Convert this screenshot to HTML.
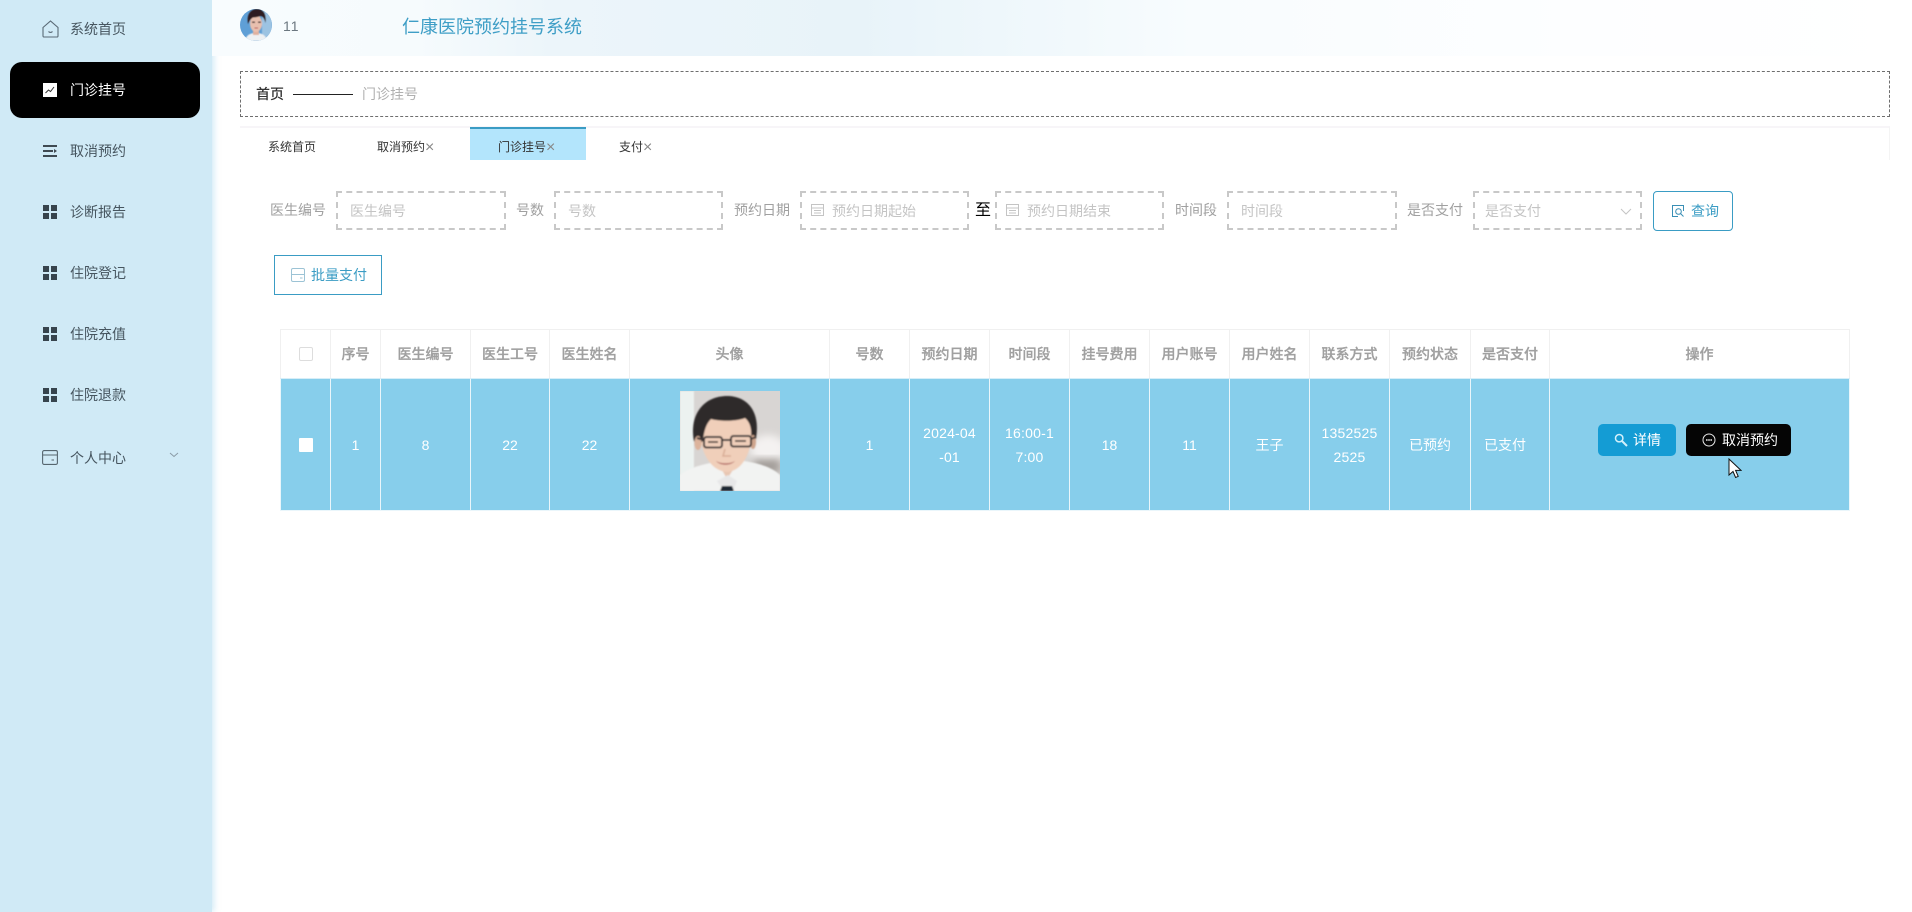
<!DOCTYPE html>
<html lang="zh">
<head>
<meta charset="utf-8">
<title>仁康医院预约挂号系统</title>
<style>
*{box-sizing:border-box}
html,body{margin:0;padding:0;width:1912px;height:912px;overflow:hidden;background:#fff;font-family:"Liberation Sans","Noto Sans CJK SC",sans-serif;font-size:14px}
.a{position:absolute;white-space:nowrap}
#side{position:absolute;left:0;top:0;width:212px;height:912px;background:#d0eaf6;box-shadow:2px 0 6px rgba(190,225,242,.7)}
.mi{position:absolute;left:70px;height:24px;line-height:24px;color:#46555f;font-size:14px;white-space:nowrap}
.ic{position:absolute;left:42px}
#active{position:absolute;left:10px;top:62px;width:190px;height:56px;background:#000;border-radius:12px}
#hd{position:absolute;left:212px;top:0;width:1700px;height:56px;background:linear-gradient(90deg,#f8fcfe 0,#f6fbfd 12%,#ecf5fa 20%,#e8f3f9 38%,#eef7fb 46%,#f8fcfe 58%,#fdfeff 80%,#fff 100%)}
.inp{position:absolute;top:191px;height:39px;border:2px dashed #c8c8c8}
.ph{position:absolute;top:199px;line-height:24px;color:#c4c4c4;font-size:14px;white-space:nowrap}
.lb{position:absolute;top:198px;line-height:24px;color:#a0a0a0;font-size:14px;white-space:nowrap}
.tab{position:absolute;top:135px;line-height:24px;font-size:12px;color:#333;white-space:nowrap}
.x{color:#888;font-size:16px;line-height:20px;vertical-align:-1px}
table{position:absolute;left:280px;top:329px;width:1569px;border-collapse:collapse;table-layout:fixed}
th{height:49px;background:#fff;color:#a0a0a0;font-weight:500;font-size:14px;border:1px solid #f0f0f0;border-bottom:1px solid #d6eef8;padding:0;-webkit-text-stroke:.3px #a0a0a0}
td{height:132px;background:#87ceeb;color:#fff;font-size:14px;line-height:24px;text-align:center;border:1px solid #eaf6fb;padding:0 8px;word-break:break-all;vertical-align:middle}
</style>
</head>
<body>
<div id="side"></div>
<div id="active"></div>

<!-- sidebar icons -->
<svg class="ic" style="top:20px" width="17" height="18" viewBox="0 0 17 18" fill="none" stroke="#5a6a76" stroke-width="1.1"><path d="M1 7.5 8.5 1 16 7.5V16a1 1 0 0 1-1 1H2a1 1 0 0 1-1-1Z"/><path d="M6.5 11.5c1 1.2 3 1.2 4 0"/></svg>
<div class="mi" style="top:17px">系统首页</div>

<svg class="ic" style="top:83px;left:43px" width="14" height="14" viewBox="0 0 14 14"><rect width="14" height="14" fill="#fff"/><path d="M2.5 10 5.5 7 7.5 8.5 11 4" fill="none" stroke="#333" stroke-width="1"/></svg>
<div class="mi" style="top:78px;color:#fff">门诊挂号</div>

<svg class="ic" style="top:144px;left:43px" width="14" height="14" viewBox="0 0 14 14" fill="#3f4a52"><rect y="1" width="14" height="2"/><rect y="6" width="10" height="2"/><rect y="11" width="14" height="2"/><path d="M11 5v4l3-2z"/></svg>
<div class="mi" style="top:139px">取消预约</div>

<svg class="ic" style="top:205px;left:43px" width="14" height="14" fill="#37444d"><rect width="6" height="6"/><rect x="8" width="6" height="6"/><rect y="8" width="6" height="6"/><rect x="8" y="8" width="6" height="6"/></svg>
<div class="mi" style="top:200px">诊断报告</div>

<svg class="ic" style="top:266px;left:43px" width="14" height="14" fill="#37444d"><rect width="6" height="6"/><rect x="8" width="6" height="6"/><rect y="8" width="6" height="6"/><rect x="8" y="8" width="6" height="6"/></svg>
<div class="mi" style="top:261px">住院登记</div>

<svg class="ic" style="top:327px;left:43px" width="14" height="14" fill="#37444d"><rect width="6" height="6"/><rect x="8" width="6" height="6"/><rect y="8" width="6" height="6"/><rect x="8" y="8" width="6" height="6"/></svg>
<div class="mi" style="top:322px">住院充值</div>

<svg class="ic" style="top:388px;left:43px" width="14" height="14" fill="#37444d"><rect width="6" height="6"/><rect x="8" width="6" height="6"/><rect y="8" width="6" height="6"/><rect x="8" y="8" width="6" height="6"/></svg>
<div class="mi" style="top:383px">住院退款</div>

<svg class="ic" style="top:450px" width="16" height="15" viewBox="0 0 16 15" fill="none" stroke="#56666f" stroke-width="1.1"><rect x=".6" y=".6" width="14.8" height="13.8" rx="1.5"/><path d="M.6 5h14.8M9.5 10h2.5"/></svg>
<div class="mi" style="top:446px">个人中心</div>
<svg class="a" style="left:169px;top:452px" width="10" height="6" viewBox="0 0 10 6" fill="none" stroke="#8a9aa5"><path d="M1 1l4 3.5L9 1"/></svg>

<!-- header -->
<div id="hd"></div>
<svg class="a" style="left:240px;top:9px" width="32" height="32" viewBox="0 0 32 32">
<defs><clipPath id="av"><circle cx="16" cy="16" r="16"/></clipPath><filter id="b1"><feGaussianBlur stdDeviation=".4"/></filter></defs>
<g clip-path="url(#av)"><rect width="32" height="32" fill="#5f9fd6"/><g filter="url(#b1)">
<rect x="22" y="0" width="10" height="32" fill="#9cc3e2"/>
<path d="M5 32c1-6 5-8 11-8s10 2 11 8z" fill="#eef0f2"/>
<rect x="13" y="20" width="6" height="6" fill="#e0b09e"/>
<ellipse cx="16" cy="14.5" rx="6" ry="8.5" fill="#e8bfae"/>
<path d="M8 15C6 4 12 0 17 0s10 3 8.5 14c-1-4-2.5-6-4.5-7-3 1-6 1.5-8 1.5-2 1-3.5 3-5 6.500z" fill="#2e1f20"/>
<rect x="12" y="12.5" width="3" height="1.3" fill="#2e1f20"/><rect x="18" y="12.5" width="3" height="1.3" fill="#2e1f20"/>
<rect x="14.5" y="18.5" width="3.5" height="1" fill="#b84f55"/>
</g></g></svg>
<div class="a" style="left:283px;top:14px;line-height:24px;color:#6b7780;font-size:14px;letter-spacing:1px">11</div>
<div class="a" style="left:402px;top:14px;line-height:26px;color:#3e9ec6;font-size:18px">仁康医院预约挂号系统</div>

<!-- breadcrumb -->
<div class="a" style="left:240px;top:71px;width:1650px;height:46px;border:1px dashed #6e6e6e"></div>
<div class="a" style="left:256px;top:82px;line-height:24px;color:#333;font-size:14px;font-weight:500">首页</div>
<div class="a" style="left:293px;top:94px;width:60px;height:1px;background:#222"></div>
<div class="a" style="left:362px;top:82px;line-height:24px;color:#b0b0b0;font-size:14px">门诊挂号</div>

<!-- tabs -->
<div class="a" style="left:240px;top:126px;width:1650px;height:34px;border-top:2px solid #f7f5f8;border-right:1px solid #f4f4f4"></div>
<div class="a" style="left:470px;top:127px;width:116px;height:33px;background:#b3e5fc;border-top:2px solid #3a9cc4"></div>
<div class="tab" style="left:268px">系统首页</div>
<div class="tab" style="left:377px">取消预约<span class="x">×</span></div>
<div class="tab" style="left:498px">门诊挂号<span class="x">×</span></div>
<div class="tab" style="left:619px">支付<span class="x">×</span></div>

<!-- search form -->
<div class="lb" style="left:270px">医生编号</div>
<div class="inp" style="left:336px;width:170px"></div>
<div class="ph" style="left:350px">医生编号</div>
<div class="lb" style="left:516px">号数</div>
<div class="inp" style="left:554px;width:169px"></div>
<div class="ph" style="left:568px">号数</div>
<div class="lb" style="left:734px">预约日期</div>
<div class="inp" style="left:800px;width:169px"></div>
<svg class="a" style="left:811px;top:203px" width="13" height="13" viewBox="0 0 13 13" fill="none" stroke="#c4c4c4"><rect x=".5" y="1.5" width="12" height="11"/><path d="M.5 5h12M3 7.5h7M3 10h7"/></svg>
<div class="ph" style="left:832px">预约日期起始</div>
<div class="a" style="left:975px;top:199px;line-height:24px;color:#000;font-size:16px">至</div>
<div class="inp" style="left:995px;width:169px"></div>
<svg class="a" style="left:1006px;top:203px" width="13" height="13" viewBox="0 0 13 13" fill="none" stroke="#c4c4c4"><rect x=".5" y="1.5" width="12" height="11"/><path d="M.5 5h12M3 7.5h7M3 10h7"/></svg>
<div class="ph" style="left:1027px">预约日期结束</div>
<div class="lb" style="left:1175px">时间段</div>
<div class="inp" style="left:1227px;width:170px"></div>
<div class="ph" style="left:1241px">时间段</div>
<div class="lb" style="left:1407px">是否支付</div>
<div class="inp" style="left:1473px;width:169px"></div>
<div class="ph" style="left:1485px">是否支付</div>
<svg class="a" style="left:1620px;top:208px" width="12" height="7" viewBox="0 0 12 7" fill="none" stroke="#c4c4c4"><path d="M1 1l5 5 5-5"/></svg>

<div class="a" style="left:1653px;top:191px;width:80px;height:40px;border:1px solid #3a9cc4;border-radius:4px"></div>
<svg class="a" style="left:1671px;top:204px" width="14" height="14" viewBox="0 0 14 14" fill="none" stroke="#3a8fb5"><path d="M12.5 7V1.5h-11v11H7"/><circle cx="7.5" cy="7.5" r="2.8"/><path d="M9.6 9.6 12.5 12.5"/></svg>
<div class="a" style="left:1691px;top:199px;line-height:24px;color:#3a9cc4;font-size:14px">查询</div>

<!-- batch -->
<div class="a" style="left:274px;top:255px;width:108px;height:40px;border:1px solid #3a9cc4"></div>
<svg class="a" style="left:291px;top:268px" width="14" height="14" viewBox="0 0 14 14" fill="none" stroke="#9cc3d5"><rect x=".5" y=".5" width="13" height="13" rx="1.5"/><path d="M.5 6.5h13M9 10h2.5"/></svg>
<div class="a" style="left:311px;top:263px;line-height:24px;color:#3a9cc4;font-size:14px">批量支付</div>

<!-- table -->
<table>
<colgroup><col style="width:50px"><col style="width:50px"><col style="width:90px"><col style="width:79px"><col style="width:80px"><col style="width:200px"><col style="width:80px"><col style="width:80px"><col style="width:80px"><col style="width:80px"><col style="width:80px"><col style="width:80px"><col style="width:80px"><col style="width:81px"><col style="width:79px"><col style="width:300px"></colgroup>
<tr><th></th><th>序号</th><th>医生编号</th><th>医生工号</th><th>医生姓名</th><th>头像</th><th>号数</th><th>预约日期</th><th>时间段</th><th>挂号费用</th><th>用户账号</th><th>用户姓名</th><th>联系方式</th><th>预约状态</th><th>是否支付</th><th>操作</th></tr>
<tr><td></td><td>1</td><td>8</td><td>22</td><td>22</td><td></td><td>1</td><td style="letter-spacing:.2px">2024-04<br>-01</td><td style="letter-spacing:.2px">16:00-1<br>7:00</td><td>18</td><td>11</td><td>王子</td><td style="letter-spacing:.2px">1352525<br>2525</td><td>已预约</td><td><span style="position:relative;left:-5px">已支付</span></td><td></td></tr>
</table>

<div class="a" style="left:299px;top:347px;width:14px;height:14px;border:1px solid #ddd;border-radius:2px;background:#fff"></div>
<div class="a" style="left:299px;top:438px;width:14px;height:14px;background:#fff;border-radius:1px"></div>

<!-- doctor photo -->
<svg class="a" style="left:680px;top:391px" width="100" height="100" viewBox="0 0 100 100">
<defs>
<filter id="b2" x="-10%" y="-10%" width="120%" height="120%"><feGaussianBlur stdDeviation=".9"/></filter>
<filter id="b3" x="-30%" y="-30%" width="160%" height="160%"><feGaussianBlur stdDeviation="4"/></filter>
<clipPath id="ph"><rect width="100" height="100"/></clipPath>
</defs>
<g clip-path="url(#ph)">
<rect width="100" height="100" fill="#d8d5d3"/>
<rect width="14" height="100" fill="#ecf2f0" filter="url(#b2)"/>
<ellipse cx="88" cy="58" rx="18" ry="14" fill="#f4f2f1" filter="url(#b3)"/>
<rect x="74" y="68" width="26" height="14" fill="#a39d99" filter="url(#b3)"/>
<g filter="url(#b2)">
<path d="M0 100V84c10-8 22-10 30-12l16 6 18-8c14 2 28 6 36 14v16z" fill="#f2f3f2"/>
<path d="M36 68 47 88 60 68V60H36z" fill="#e8c6b2"/>
<path d="M37 90 44 100h9l4-10-9-6z" fill="#e7e7e8"/>
<path d="M42 95h10l2 5H40z" fill="#1c2830"/>
<path d="M20 40C20 60 30 80 47 81 63 80 72 60 72 40 72 24 60 18 45 18 30 18 20 26 20 40z" fill="#f0cfba"/>
<path d="M14 50C9 22 25 5 47 5 67 5 81 20 76 48L71 48C72 38 70 31 65 27 55 31 38 30 31 28 26 33 24 40 23 50L18 54z" fill="#2f2a2b"/>
<ellipse cx="18" cy="52" rx="3.5" ry="7" fill="#dcb39b"/>
<ellipse cx="73" cy="51" rx="3" ry="7" fill="#cfa58d"/>
<g fill="none" stroke="#3a3434" stroke-width="2"><rect x="24" y="46" width="18" height="10.5" rx="2.5"/><rect x="51" y="45" width="20" height="10.5" rx="2.5"/><path d="M42 49h9M24 49l-7-2M71 48l5-2"/></g>
<path d="M28 51h10M55 50h11" stroke="#2a2424" stroke-width="1.6"/>
<path d="M45 58l-2 7h8" fill="none" stroke="#d9ad97" stroke-width="1.5"/>
<path d="M36 70c5 3 14 3 19 0-4 5-15 5-19 0z" fill="#b8716a"/>
</g></g></svg>

<!-- buttons -->
<div class="a" style="left:1598px;top:424px;width:78px;height:32px;background:#149cd4;border-radius:5px"></div>
<svg class="a" style="left:1614px;top:433px" width="14" height="14" viewBox="0 0 14 14" fill="none" stroke="#d2f0fb" stroke-width="1.5"><circle cx="5.2" cy="5.2" r="3.7"/><path d="M8 8l5 5" stroke-width="2"/></svg>
<div class="a" style="left:1633px;top:428px;line-height:24px;color:#fff;font-size:14px">详情</div>
<div class="a" style="left:1686px;top:424px;width:105px;height:32px;background:#050505;border-radius:5px"></div>
<svg class="a" style="left:1702px;top:433px" width="14" height="14" viewBox="0 0 14 14" fill="none" stroke="#e8e8e8"><circle cx="7" cy="7" r="6"/><path d="M4 7h6" stroke-width="1.4" stroke-dasharray="1.6 .6"/></svg>
<div class="a" style="left:1722px;top:428px;line-height:24px;color:#fff;font-size:14px">取消预约</div>

<!-- cursor -->
<svg class="a" style="left:1728px;top:458px" width="14" height="21" viewBox="0 0 14 21"><path d="M1 1v16l4-3.5 2.6 6 2.6-1.1-2.6-6H13z" fill="#fff" stroke="#111" stroke-width="1"/></svg>
</body>
</html>
